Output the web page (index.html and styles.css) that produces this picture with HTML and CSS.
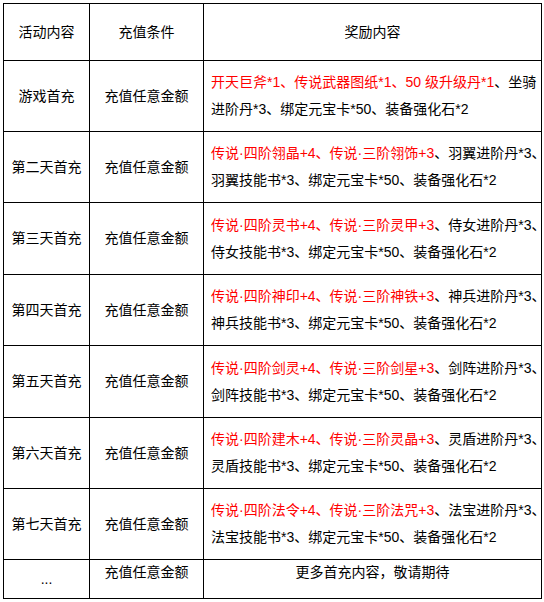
FILE: index.html
```html
<!DOCTYPE html>
<html lang="zh-CN">
<head>
<meta charset="utf-8">
<title>首充活动</title>
<link rel="stylesheet" href="styles.css">
</head>
<body>
<div class="table">
  <div class="cell head">活动内容</div>
  <div class="cell head">充值条件</div>
  <div class="cell head">奖励内容</div>

  <div class="cell">游戏首充</div>
  <div class="cell">充值任意金额</div>
  <div class="cell reward"><p><span class="red">开天巨斧*1、传说武器图纸*1、50 级升级丹*1</span>、坐骑<br>进阶丹*3、绑定元宝卡*50、装备强化石*2</p></div>

  <div class="cell">第二天首充</div>
  <div class="cell">充值任意金额</div>
  <div class="cell reward"><p><span class="red">传说·四阶翎晶+4、传说·三阶翎饰+3</span>、羽翼进阶丹*3、<br>羽翼技能书*3、绑定元宝卡*50、装备强化石*2</p></div>

  <div class="cell">第三天首充</div>
  <div class="cell">充值任意金额</div>
  <div class="cell reward"><p><span class="red">传说·四阶灵书+4、传说·三阶灵甲+3</span>、侍女进阶丹*3、<br>侍女技能书*3、绑定元宝卡*50、装备强化石*2</p></div>

  <div class="cell">第四天首充</div>
  <div class="cell">充值任意金额</div>
  <div class="cell reward"><p><span class="red">传说·四阶神印+4、传说·三阶神铁+3</span>、神兵进阶丹*3、<br>神兵技能书*3、绑定元宝卡*50、装备强化石*2</p></div>

  <div class="cell">第五天首充</div>
  <div class="cell">充值任意金额</div>
  <div class="cell reward"><p><span class="red">传说·四阶剑灵+4、传说·三阶剑星+3</span>、剑阵进阶丹*3、<br>剑阵技能书*3、绑定元宝卡*50、装备强化石*2</p></div>

  <div class="cell">第六天首充</div>
  <div class="cell">充值任意金额</div>
  <div class="cell reward"><p><span class="red">传说·四阶建木+4、传说·三阶灵晶+3</span>、灵盾进阶丹*3、<br>灵盾技能书*3、绑定元宝卡*50、装备强化石*2</p></div>

  <div class="cell">第七天首充</div>
  <div class="cell">充值任意金额</div>
  <div class="cell reward"><p><span class="red">传说·四阶法令+4、传说·三阶法咒+3</span>、法宝进阶丹*3、<br>法宝技能书*3、绑定元宝卡*50、装备强化石*2</p></div>

  <div class="cell">...</div>
  <div class="cell top">充值任意金额</div>
  <div class="cell top">更多首充内容，敬请期待</div>
</div>
</body>
</html>
```

FILE: styles.css
```css
html, body {
  margin: 0;
  padding: 0;
  background: #ffffff;
}

body {
  padding: 3px;
  font-family: "Liberation Sans", "Noto Sans CJK SC", sans-serif;
  font-size: 14px;
  color: #000000;
}

.table {
  display: grid;
  grid-template-columns: 86px 114px 338px;
  grid-template-rows: 57px 71px 71px 72px 71px 72px 71px 71px 39px;
  width: 539px;
  box-sizing: border-box;
  border-left: 1px solid #000;
  border-top: 1px solid #000;
}

.cell {
  box-sizing: border-box;
  border-right: 1px solid #000;
  border-bottom: 1px solid #000;
  display: flex;
  align-items: center;
  justify-content: center;
  text-align: center;
  line-height: 27px;
  white-space: nowrap;
}

.reward {
  justify-content: flex-start;
  text-align: left;
  padding-left: 7px;
}

.reward p {
  margin: 0;
}

.top {
  align-items: flex-start;
  line-height: 25px;
}

.red {
  color: #ff0000;
}
```
